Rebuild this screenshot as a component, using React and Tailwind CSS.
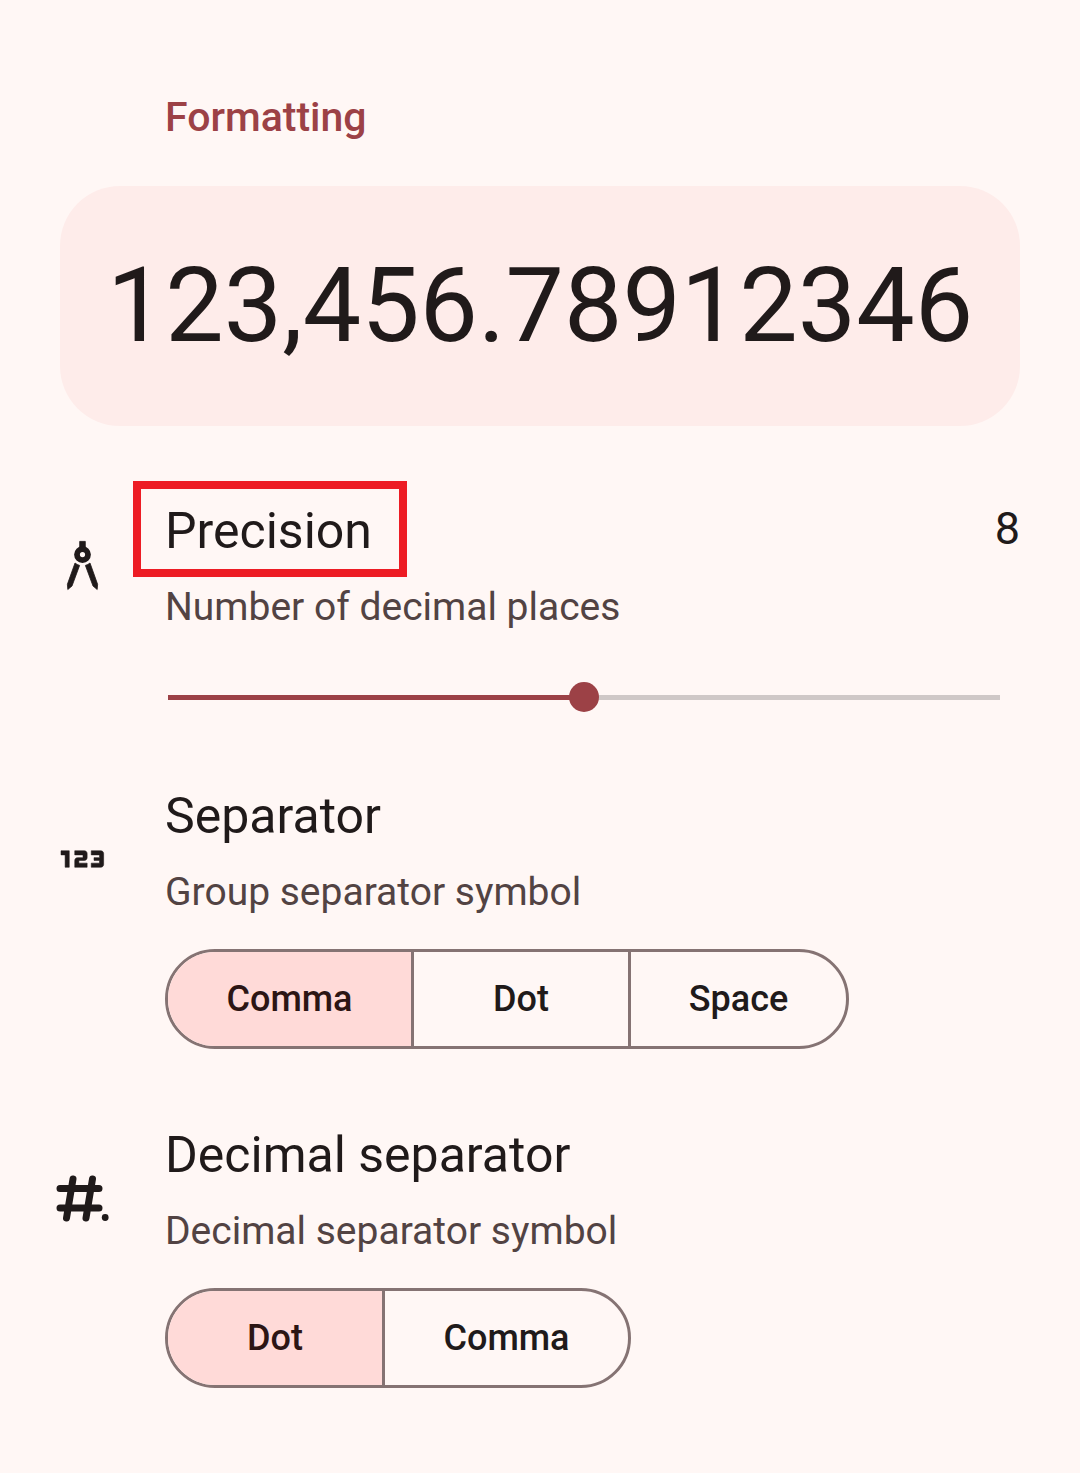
import { useState } from "react";
import { Md123 } from "react-icons/md";

function CompassIcon() {
  return (
    <svg viewBox="0 0 66 66" className="-mt-4 size-[66px]" fill="currentColor" stroke="currentColor" strokeWidth="0.8" aria-hidden="true">
      <path d="M29.700 8.400H35.300V17H29.700Z" />
      <circle cx="32.500" cy="21.600" r="5.500" fill="none" strokeWidth="5.800" />
      <path d="M25 30Q27 31.700 29.600 32.400L22 53L17.800 56.500L17.400 51.300Z" />
      <path d="M40 30Q38 31.700 35.400 32.400L43 53L47.200 56.500L47.600 51.300Z" />
    </svg>
  );
}

function HashDotIcon() {
  return (
    <svg viewBox="0 0 66 66" className="size-[66px]" fill="none" stroke="currentColor" strokeWidth="7" strokeLinecap="round" aria-hidden="true">
      <path d="M10 23.500H49M10 43H49M23 14L16.500 53M42.500 14L36 53" />
      <circle cx="55.200" cy="52.500" r="3.400" fill="currentColor" stroke="none" />
    </svg>
  );
}

function SettingRow({ icon, title, description, value, highlighted, children }) {
  return (
    <section className="flex gap-[49px]">
      <div className="flex h-[162px] w-[66px] shrink-0 items-center justify-center">{icon}</div>
      <div className="min-w-0 flex-1">
        <div className="flex items-start justify-between">
          <h2 className="relative text-[50px] leading-[76px]">
            {title}
            {highlighted && (
              <span className="pointer-events-none absolute -left-8 -top-3 h-24 w-[274px] border-8 border-[#ed1c24]" />
            )}
          </h2>
          {value !== undefined && <output className="text-[45px] leading-[72px]">{value}</output>}
        </div>
        <p className="text-[39px] leading-[76px] text-[#524343]">{description}</p>
        {children}
      </div>
    </section>
  );
}

function Segmented({ label, options, value, onChange }) {
  return (
    <div role="group" aria-label={label} className="mt-[19px] inline-flex h-[100px] overflow-hidden rounded-full border-3 border-[#857373] align-top">
      {options.map((option) => (
        <button
          key={option.name}
          type="button"
          aria-pressed={value === option.name}
          onClick={() => onChange(option.name)}
          className={`${option.width} border-r-3 border-[#857373] text-[36px] font-medium last:border-r-0 aria-pressed:bg-[#ffdad8] aria-pressed:text-[#2c1514]`}
        >
          {option.name}
        </button>
      ))}
    </div>
  );
}

export default function App() {
  const [precision, setPrecision] = useState(8);
  const [group, setGroup] = useState("Comma");
  const [decimal, setDecimal] = useState("Dot");
  const filled = `${(precision / 16) * 100}%`;

  return (
    <main className="min-h-screen bg-[#fff7f5] pb-[85px] pt-[87px] font-['Roboto',sans-serif] text-[#201a1a]">
      <h1 className="pl-[165px] text-[41px] font-medium leading-[60px] text-[#9c4146]">Formatting</h1>
      <div className="mx-[60px] mt-[39px] flex h-60 items-center justify-center rounded-[60px] bg-[#feecea] text-[104px]">
        123,456.78912346
      </div>
      <div className="mt-[67px] flex flex-col gap-[68px] pl-[50px] pr-[60px]">
        <SettingRow
          icon={<CompassIcon />}
          title="Precision"
          description="Number of decimal places"
          value={precision}
          highlighted
        >
          <div className="mt-[39px] pl-[3px] pr-5">
            <input
              type="range"
              aria-label="Precision"
              min="0"
              max="16"
              value={precision}
              onChange={(e) => setPrecision(Number(e.target.value))}
              style={{ "--filled": filled }}
              className="block h-[26px] w-full appearance-none bg-transparent [&::-webkit-slider-runnable-track]:h-[5px] [&::-webkit-slider-runnable-track]:bg-[linear-gradient(to_right,#9c4146_var(--filled),#cfc8c7_var(--filled))] [&::-webkit-slider-thumb]:-mt-[13px] [&::-webkit-slider-thumb]:size-[30px] [&::-webkit-slider-thumb]:appearance-none [&::-webkit-slider-thumb]:rounded-full [&::-webkit-slider-thumb]:bg-[#9c4146]"
            />
          </div>
        </SettingRow>
        <SettingRow
          icon={<Md123 className="size-[66px] [&>path:last-child]:[stroke-width:0.2]" />}
          title="Separator"
          description="Group separator symbol"
        >
          <Segmented
            label="Group separator symbol"
            value={group}
            onChange={setGroup}
            options={[
              { name: "Comma", width: "w-[246px]" },
              { name: "Dot", width: "w-[217px]" },
              { name: "Space", width: "w-[215px]" },
            ]}
          />
        </SettingRow>
        <SettingRow icon={<HashDotIcon />} title="Decimal separator" description="Decimal separator symbol">
          <Segmented
            label="Decimal separator symbol"
            value={decimal}
            onChange={setDecimal}
            options={[
              { name: "Dot", width: "w-[217px]" },
              { name: "Comma", width: "w-[243px]" },
            ]}
          />
        </SettingRow>
      </div>
    </main>
  );
}
